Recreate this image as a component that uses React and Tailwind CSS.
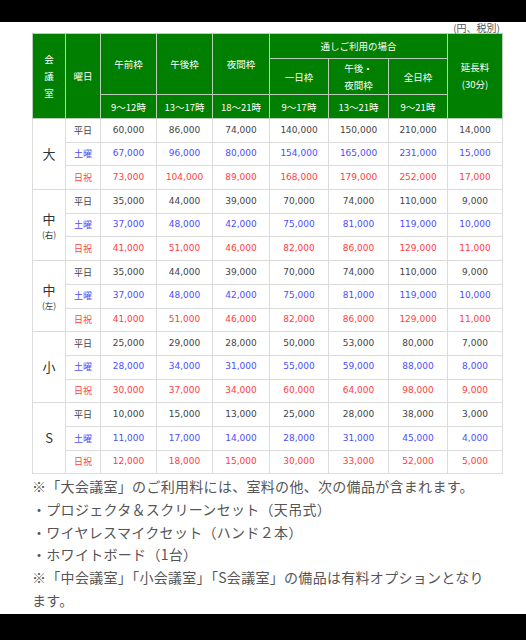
import React from 'react'

const rooms = [
  {
    name: '大',
    rows: [
      ['60,000', '86,000', '74,000', '140,000', '150,000', '210,000', '14,000'],
      ['67,000', '96,000', '80,000', '154,000', '165,000', '231,000', '15,000'],
      ['73,000', '104,000', '89,000', '168,000', '179,000', '252,000', '17,000'],
    ],
  },
  {
    name: '中',
    sub: '(右)',
    rows: [
      ['35,000', '44,000', '39,000', '70,000', '74,000', '110,000', '9,000'],
      ['37,000', '48,000', '42,000', '75,000', '81,000', '119,000', '10,000'],
      ['41,000', '51,000', '46,000', '82,000', '86,000', '129,000', '11,000'],
    ],
  },
  {
    name: '中',
    sub: '(左)',
    rows: [
      ['35,000', '44,000', '39,000', '70,000', '74,000', '110,000', '9,000'],
      ['37,000', '48,000', '42,000', '75,000', '81,000', '119,000', '10,000'],
      ['41,000', '51,000', '46,000', '82,000', '86,000', '129,000', '11,000'],
    ],
  },
  {
    name: '小',
    rows: [
      ['25,000', '29,000', '28,000', '50,000', '53,000', '80,000', '7,000'],
      ['28,000', '34,000', '31,000', '55,000', '59,000', '88,000', '8,000'],
      ['30,000', '37,000', '34,000', '60,000', '64,000', '98,000', '9,000'],
    ],
  },
  {
    name: 'S',
    rows: [
      ['10,000', '15,000', '13,000', '25,000', '28,000', '38,000', '3,000'],
      ['11,000', '17,000', '14,000', '28,000', '31,000', '45,000', '4,000'],
      ['12,000', '18,000', '15,000', '30,000', '33,000', '52,000', '5,000'],
    ],
  },
]

const days = [
  { label: '平日', color: 'text-[#444]' },
  { label: '土曜', color: 'text-[#4d4dff]' },
  { label: '日祝', color: 'text-[#ff4040]' },
]

const jp = { fontFamily: '"Noto Sans CJK JP", sans-serif' }
const num = { fontFamily: '"DejaVu Sans", "Noto Sans CJK JP", sans-serif' }

const th = 'border border-[#b9cdb9] bg-[#007f00] text-white text-[9.5px] font-normal text-center align-middle p-0 leading-[16px]'
const td = 'border border-[#dcdcdc] text-center align-middle p-0 text-[9px]'

export default function App() {
  return (
    <div className="w-[526px] h-[640px] bg-white flex flex-col overflow-hidden">
      <div className="h-[22px] bg-black shrink-0" />

      <div className="flex-1 pl-[32px] pr-[24px]">
        <div className="h-[11px] text-right text-[10px] leading-[11px] text-[#555] pr-[2px]" style={jp}>
          (円、税別)
        </div>

        <table className="w-[470px] table-fixed border-collapse border border-[#cfcfcf]" style={jp}>
          <colgroup>
            <col className="w-[33px]" />
            <col className="w-[35px]" />
            <col className="w-[56px]" />
            <col className="w-[56px]" />
            <col className="w-[57px]" />
            <col className="w-[59px]" />
            <col className="w-[60px]" />
            <col className="w-[59px]" />
            <col className="w-[55px]" />
          </colgroup>
          <thead>
            <tr className="h-[25px]">
              <th rowSpan={3} className={th}>
                <div className="flex flex-col items-center leading-[17px]">
                  <span>会</span>
                  <span>議</span>
                  <span>室</span>
                </div>
              </th>
              <th rowSpan={3} className={th}>曜日</th>
              <th rowSpan={2} className={th}>午前枠</th>
              <th rowSpan={2} className={th}>午後枠</th>
              <th rowSpan={2} className={th}>夜間枠</th>
              <th colSpan={3} className={th}>通しご利用の場合</th>
              <th rowSpan={3} className={th}>
                <div className="leading-[17px]">延長料</div>
                <div className="leading-[17px]">(30分)</div>
              </th>
            </tr>
            <tr className="h-[36px]">
              <th className={th}>一日枠</th>
              <th className={th}>
                <div className="leading-[17px]">午後・</div>
                <div className="leading-[17px]">夜間枠</div>
              </th>
              <th className={th}>全日枠</th>
            </tr>
            <tr className="h-[24px]">
              <th className={th}>9～12時</th>
              <th className={th}>13～17時</th>
              <th className={th}>18～21時</th>
              <th className={th}>9～17時</th>
              <th className={th}>13～21時</th>
              <th className={th}>9～21時</th>
            </tr>
          </thead>
          <tbody>
            {rooms.map((room, ri) =>
              room.rows.map((vals, di) => (
                <tr key={`${ri}-${di}`} className="h-[23.7px]">
                  {di === 0 && (
                    <td rowSpan={3} className={`${td} text-[#333]`}>
                      <div className="text-[13px] leading-[18px]">{room.name}</div>
                      {room.sub && <div className="text-[8.5px] leading-[12px]">{room.sub}</div>}
                    </td>
                  )}
                  <td className={`${td} text-[9.5px] ${days[di].color}`}>{days[di].label}</td>
                  {vals.map((v, vi) => (
                    <td key={vi} className={`${td} ${days[di].color}`} style={num}>
                      {v}
                    </td>
                  ))}
                </tr>
              ))
            )}
          </tbody>
        </table>

        <div className="mt-[1px] text-[14px] leading-[22.7px] tracking-[0.3px] text-[#555] w-[462px]" style={jp}>
          <p>※「大会議室」のご利用料には、室料の他、次の備品が含まれます。</p>
          <p>・プロジェクタ＆スクリーンセット（天吊式）</p>
          <p>・ワイヤレスマイクセット（ハンド２本）</p>
          <p>・ホワイトボード（1台）</p>
          <p>※「中会議室」「小会議室」「S会議室」の備品は有料オプションとなります。</p>
        </div>
      </div>

      <div className="h-[26px] bg-black shrink-0" />
    </div>
  )
}
